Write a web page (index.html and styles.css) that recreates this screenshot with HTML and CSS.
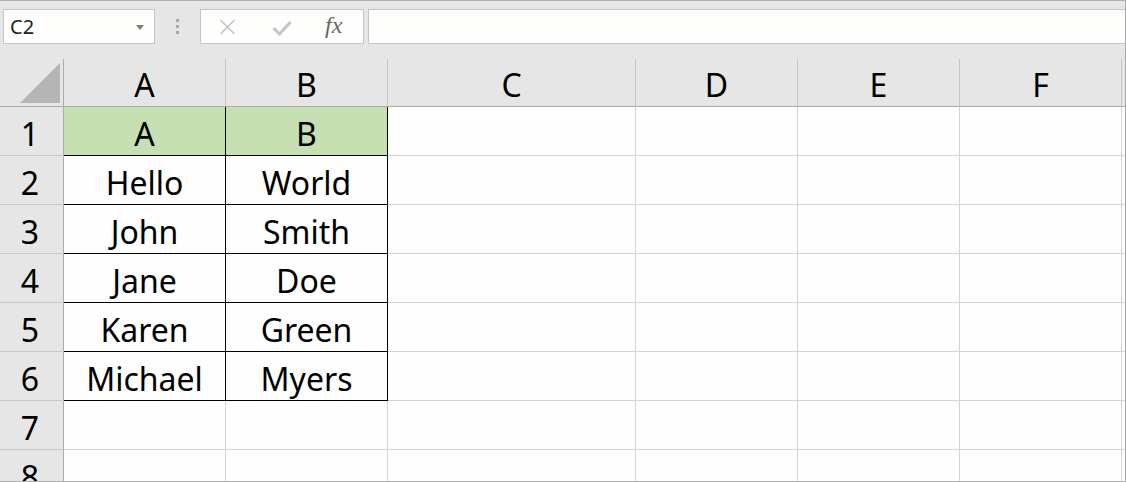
FILE: index.html
```html
<!DOCTYPE html>
<html>
<head>
<meta charset="utf-8">
<link rel="stylesheet" href="styles.css">
</head>
<body>
<div class="app">
  <div class="toolbar">
    <div class="namebox">
      <span class="name">C2</span>
      <svg class="dd" width="8" height="5" viewBox="0 0 8 5"><polygon points="0,0 8,0 4,5" fill="#7f7f7f"/></svg>
    </div>
    <div class="dots"><span></span><span></span><span></span></div>
    <div class="fbtns">
      <svg class="ico-x" width="17" height="16" viewBox="0 0 17 16"><path d="M1.5 1 L15.5 15 M15.5 1 L1.5 15" stroke="#c4c4c4" stroke-width="1.6" fill="none"/></svg>
      <svg class="ico-ok" width="20" height="16" viewBox="0 0 20 16"><path d="M1.5 8 L7.5 14 L18.5 2" stroke="#c4c4c4" stroke-width="3" fill="none"/></svg>
      <span class="fx">fx</span>
    </div>
    <div class="finput"></div>
  </div>
  <div class="grid">
    <div class="corner"><svg width="63" height="47" viewBox="0 0 63 47"><polygon points="20,44 60,44 60,4" fill="#b5b5b5"/></svg></div>
    <div class="colh">A</div>
    <div class="colh">B</div>
    <div class="colh">C</div>
    <div class="colh">D</div>
    <div class="colh">E</div>
    <div class="colh">F</div>
    <div class="colh last"></div>

    <div class="rowh">1</div>
    <div class="cell b hd">A</div>
    <div class="cell b hd">B</div>
    <div class="cell"></div><div class="cell"></div><div class="cell"></div><div class="cell"></div><div class="cell last"></div>

    <div class="rowh">2</div>
    <div class="cell b">Hello</div>
    <div class="cell b">World</div>
    <div class="cell"></div><div class="cell"></div><div class="cell"></div><div class="cell"></div><div class="cell last"></div>

    <div class="rowh">3</div>
    <div class="cell b">John</div>
    <div class="cell b">Smith</div>
    <div class="cell"></div><div class="cell"></div><div class="cell"></div><div class="cell"></div><div class="cell last"></div>

    <div class="rowh">4</div>
    <div class="cell b">Jane</div>
    <div class="cell b">Doe</div>
    <div class="cell"></div><div class="cell"></div><div class="cell"></div><div class="cell"></div><div class="cell last"></div>

    <div class="rowh">5</div>
    <div class="cell b">Karen</div>
    <div class="cell b">Green</div>
    <div class="cell"></div><div class="cell"></div><div class="cell"></div><div class="cell"></div><div class="cell last"></div>

    <div class="rowh">6</div>
    <div class="cell b">Michael</div>
    <div class="cell b">Myers</div>
    <div class="cell"></div><div class="cell"></div><div class="cell"></div><div class="cell"></div><div class="cell last"></div>

    <div class="rowh">7</div>
    <div class="cell"></div><div class="cell"></div>
    <div class="cell"></div><div class="cell"></div><div class="cell"></div><div class="cell"></div><div class="cell last"></div>

    <div class="rowh">8</div>
    <div class="cell"></div><div class="cell"></div>
    <div class="cell"></div><div class="cell"></div><div class="cell"></div><div class="cell"></div><div class="cell last"></div>
  </div>
</div>
</body>
</html>
```

FILE: styles.css
```css
* { box-sizing: border-box; }
html, body { margin: 0; padding: 0; }
body {
  width: 1126px;
  height: 482px;
  overflow: hidden;
  background: #e6e6e6;
  font-family: "Noto Sans", "Open Sans", sans-serif;
}
.app {
  width: 1126px;
  height: 482px;
  border-top: 1px solid #b0b0b0;
  border-right: 1px solid #a8a8a8;
  border-bottom: 1px solid #b0b0b0;
  background: #e6e6e6;
  overflow: hidden;
  display: flex;
  flex-direction: column;
}
.toolbar {
  height: 58px;
  flex: none;
  display: flex;
  align-items: flex-start;
  padding-top: 8px;
  padding-left: 3px;
}
.namebox {
  width: 152px;
  height: 35px;
  border: 1px solid #c6c6c6;
  background: #fefefc;
  display: flex;
  align-items: center;
  justify-content: space-between;
  padding: 0 10px 0 6px;
}
.name {
  font-size: 20px;
  color: #222;
  line-height: 1;
}
.dd { margin-top: 1px; }
.dots {
  width: 45px;
  height: 35px;
  display: flex;
  flex-direction: column;
  align-items: center;
  justify-content: center;
  gap: 3px;
}
.dots span {
  width: 3px;
  height: 3px;
  background: #a8a8a8;
}
.fbtns {
  width: 164px;
  height: 35px;
  border: 1px solid #c6c6c6;
  background: #fefefc;
  display: flex;
  align-items: center;
  padding-left: 18px;
}
.ico-x { margin-right: 36px; }
.ico-ok { margin-right: 33px; margin-top: 2px; }
.fx {
  font-family: "Liberation Serif", serif;
  font-style: italic;
  font-size: 24px;
  color: #666;
  line-height: 1;
  margin-top: -3px;
}
.finput {
  margin-left: 4px;
  flex: 1;
  height: 35px;
  border: 1px solid #c6c6c6;
  border-right: none;
  background: #fefefc;
}
.grid {
  flex: 1;
  display: grid;
  grid-template-columns: 64px 162px 162px 248px 162px 162px 162px 3px;
  grid-template-rows: 48px repeat(8, 49px);
  background: #fefefe;
  overflow: hidden;
}
.corner {
  background: #e6e6e6;
  border-right: 1px solid #ababab;
  border-bottom: 1px solid #ababab;
}
.corner svg { display: block; }
.colh {
  background: #e6e6e6;
  border-right: 1px solid #c4c4c4;
  border-bottom: 1px solid #ababab;
  display: flex;
  align-items: center;
  justify-content: center;
  font-size: 32px;
  color: #000;
  padding-top: 3px;
}
.colh.last { border-right: none; }
.rowh {
  background: #e6e6e6;
  border-right: 1px solid #ababab;
  border-bottom: 1px solid #c8c8c8;
  display: flex;
  align-items: center;
  justify-content: center;
  font-size: 32px;
  color: #000;
  padding-top: 4px;
  padding-right: 3px;
}
.cell {
  border-right: 1px solid #d4d4d4;
  border-bottom: 1px solid #d4d4d4;
  display: flex;
  align-items: center;
  justify-content: center;
  font-size: 32px;
  color: #000;
  padding-top: 4px;
  white-space: nowrap;
}
.cell.last { border-right: none; }
.cell.b {
  border-right-color: #000;
  border-bottom-color: #000;
}
.cell.hd { background: #c6e0b4; }
```
